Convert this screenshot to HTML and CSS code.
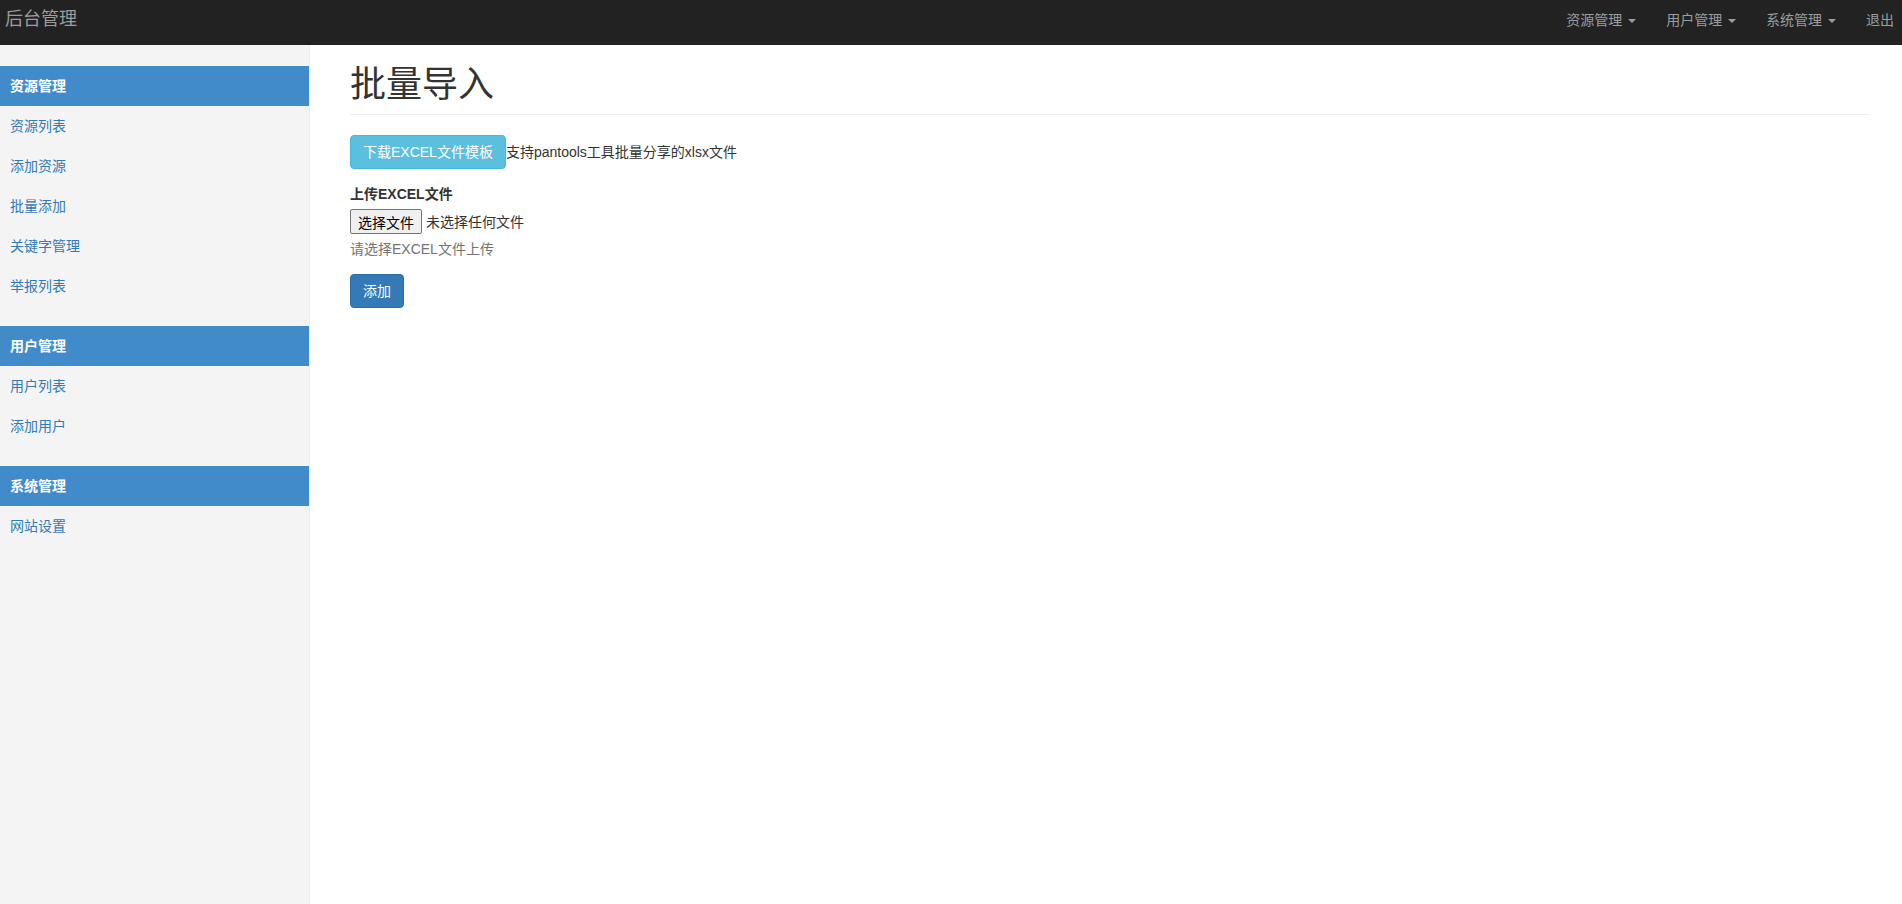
FILE: index.html
```html
<!DOCTYPE html>
<html>
<head>
    <meta charset="utf-8">
    <title>后台管理 - 批量导入</title>
    <link rel="stylesheet" href="styles.css">
</head>
<body>
    <nav class="navbar">
        <a class="brand" href="#">后台管理</a>
        <ul class="nav-links">
            <li><a href="#">资源管理 <span class="caret"></span></a></li>
            <li><a href="#">用户管理 <span class="caret"></span></a></li>
            <li><a href="#">系统管理 <span class="caret"></span></a></li>
            <li><a class="logout" href="#">退出</a></li>
        </ul>
    </nav>

    <div class="page">
        <div class="sidebar">
            <div class="menu-group">
                <div class="menu-title">资源管理</div>
                <a class="menu-item" href="#">资源列表</a>
                <a class="menu-item" href="#">添加资源</a>
                <a class="menu-item" href="#">批量添加</a>
                <a class="menu-item" href="#">关键字管理</a>
                <a class="menu-item" href="#">举报列表</a>
            </div>
            <div class="menu-group">
                <div class="menu-title">用户管理</div>
                <a class="menu-item" href="#">用户列表</a>
                <a class="menu-item" href="#">添加用户</a>
            </div>
            <div class="menu-group">
                <div class="menu-title">系统管理</div>
                <a class="menu-item" href="#">网站设置</a>
            </div>
        </div>

        <div class="main">
            <div class="page-header">
                <h1>批量导入</h1>
            </div>

            <div class="form-group">
                <a class="btn btn-info" href="#">下载EXCEL文件模板</a><span class="hint">支持pantools工具批量分享的xlsx文件</span>
            </div>

            <div class="form-group">
                <label>上传EXCEL文件</label>
                <div class="file-input">
                    <button class="file-btn" type="button">选择文件</button>
                    <span class="file-name">未选择任何文件</span>
                </div>
                <p class="help-block">请选择EXCEL文件上传</p>
            </div>

            <button class="btn btn-primary" type="button">添加</button>
        </div>
    </div>
</body>
</html>
```

FILE: styles.css
```css
* {
    box-sizing: border-box;
}

html, body {
    height: 100%;
}

body {
    margin: 0;
    font-family: "Liberation Sans", Arial, "Noto Sans CJK SC", sans-serif;
    font-size: 14px;
    line-height: 20px;
    color: #333;
    background-color: #fff;
    display: flex;
    flex-direction: column;
}

a {
    text-decoration: none;
}

/* top bar */
.navbar {
    display: flex;
    align-items: flex-start;
    height: 45px;
    background-color: #222;
    flex-shrink: 0;
}

.brand {
    padding: 9px 5px;
    font-size: 18px;
    line-height: 20px;
    color: #9d9d9d;
}

.nav-links {
    display: flex;
    list-style: none;
    margin: 0 0 0 auto;
    padding: 0;
}

.nav-links a {
    display: block;
    padding: 10px 15px;
    color: #9d9d9d;
}

.nav-links a.logout {
    padding-right: 8px;
}

.caret {
    display: inline-block;
    width: 0;
    height: 0;
    margin-left: 2px;
    vertical-align: middle;
    border-top: 4px solid #9d9d9d;
    border-left: 4px solid transparent;
    border-right: 4px solid transparent;
}

/* layout */
.page {
    display: flex;
    flex: 1;
}

.sidebar {
    width: 310px;
    flex-shrink: 0;
    padding-top: 21px;
    background-color: #f4f4f4;
    border-right: 1px solid #eee;
}

.menu-group {
    margin-bottom: 20px;
}

.menu-title, .menu-item {
    display: block;
    height: 40px;
    padding: 10px;
}

.menu-title {
    background-color: #428bca;
    color: #fff;
    font-weight: bold;
}

.menu-item {
    color: #337ab7;
}

.main {
    flex: 1;
    padding: 0 33px 0 40px;
}

.page-header {
    margin: 20px 0 20px;
    padding-bottom: 9px;
    border-bottom: 1px solid #eee;
}

.page-header h1 {
    margin: 0;
    font-size: 36px;
    line-height: 40px;
    font-weight: normal;
}

.form-group {
    margin-bottom: 15px;
}

.form-group label {
    display: block;
    margin-bottom: 5px;
    font-weight: bold;
}

.btn {
    display: inline-block;
    padding: 6px 12px;
    font-family: inherit;
    font-size: 14px;
    line-height: 20px;
    border: 1px solid transparent;
    border-radius: 4px;
    color: #fff;
    cursor: pointer;
    vertical-align: middle;
}

.btn-info {
    background-color: #5bc0de;
    border-color: #46b8da;
}

.btn-primary {
    background-color: #337ab7;
    border-color: #2e6da4;
}

.hint {
    vertical-align: middle;
}

.file-input {
    display: flex;
    align-items: center;
    height: 25px;
}

.file-btn {
    height: 25px;
    padding: 1px 7px;
    margin-right: 4px;
    font-family: inherit;
    font-size: 14px;
    color: #000;
    background-color: #efefef;
    border: 1px solid #767676;
    border-radius: 2px;
}

.file-name {
    color: #333;
}

.help-block {
    margin: 5px 0 10px;
    color: #737373;
}
```
